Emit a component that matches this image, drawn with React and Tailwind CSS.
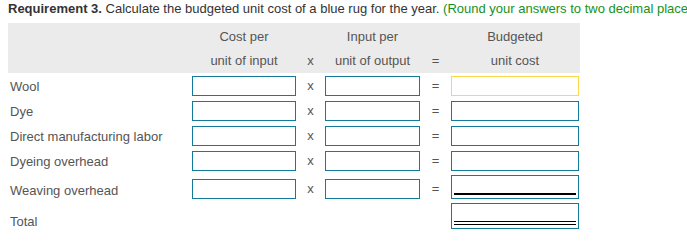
import React from 'react';

const rows = [
  { label: 'Wool', first: true },
  { label: 'Dye' },
  { label: 'Direct manufacturing labor' },
  { label: 'Dyeing overhead' },
];

const Box = ({ className = '' }) => (
  <div className={`h-[20px] border border-[#137a9b] bg-white ${className}`} />
);

const Row = ({ label, first }) => (
  <div className="grid grid-cols-[184px_104px_29px_95px_31px_128px] h-[25px] items-start pt-[3px]">
    <div className="pl-[2px] leading-[20px] pt-[1px]">{label}</div>
    <Box />
    <div className="text-center leading-[20px]">x</div>
    <Box />
    <div className="text-center leading-[20px]">=</div>
    <div className={`h-[20px] border bg-white ${first ? 'border-[#fdd94a]' : 'border-[#137a9b]'}`} />
  </div>
);

export default function App() {
  return (
    <div className="w-[687px] h-[243px] overflow-hidden bg-white pl-[8px] text-[13px] text-[#555] font-['Liberation_Sans',Arial,sans-serif]">
      {/* Title */}
      <div className="h-[23px] leading-[18px] whitespace-nowrap text-[#333]">
        <span className="font-bold">Requirement 3.</span> Calculate the budgeted unit cost of a blue rug for the year.{' '}
        <span className="text-[#16911e]">(Round your answers to two decimal places.)</span>
      </div>

      <div className="w-[572px]">
        {/* Header */}
        <div className="bg-[#ebebeb] grid grid-cols-[184px_104px_29px_95px_31px_128px] pt-[2px] h-[50px]">
          <div />
          <div className="text-center">
            <div className="leading-[24px]">Cost per</div>
            <div className="leading-[24px]">unit of input</div>
          </div>
          <div className="text-center">
            <div className="leading-[24px]">&nbsp;</div>
            <div className="leading-[24px]">x</div>
          </div>
          <div className="text-center">
            <div className="leading-[24px]">Input per</div>
            <div className="leading-[24px]">unit of output</div>
          </div>
          <div className="text-center">
            <div className="leading-[24px]">&nbsp;</div>
            <div className="leading-[24px]">=</div>
          </div>
          <div className="text-center">
            <div className="leading-[24px]">Budgeted</div>
            <div className="leading-[24px]">unit cost</div>
          </div>
        </div>

        {rows.map((r) => (
          <Row key={r.label} {...r} />
        ))}

        {/* Weaving overhead, with single underline */}
        <div className="grid grid-cols-[184px_104px_29px_95px_31px_128px] h-[28px] items-end pb-[2px]">
          <div className="pl-[2px] leading-[20px] -mb-[2px]">Weaving overhead</div>
          <Box />
          <div className="text-center leading-[20px]">x</div>
          <Box />
          <div className="text-center leading-[20px]">=</div>
          <div className="h-[24px] border border-[#137a9b] bg-white px-[2px] pt-[17px]">
            <div className="h-[2px] bg-black" />
          </div>
        </div>

        {/* Total, with double underline */}
        <div className="grid grid-cols-[184px_104px_29px_95px_31px_128px] h-[28px] items-start pt-[2px]">
          <div className="pl-[2px] leading-[20px] pt-[9px]">Total</div>
          <div />
          <div />
          <div />
          <div />
          <div className="h-[26px] border border-[#137a9b] bg-white px-[2px] pt-[17px]">
            <div className="h-[1px] bg-black" />
            <div className="h-[1px] mt-[2px] bg-black" />
          </div>
        </div>
      </div>
    </div>
  );
}
